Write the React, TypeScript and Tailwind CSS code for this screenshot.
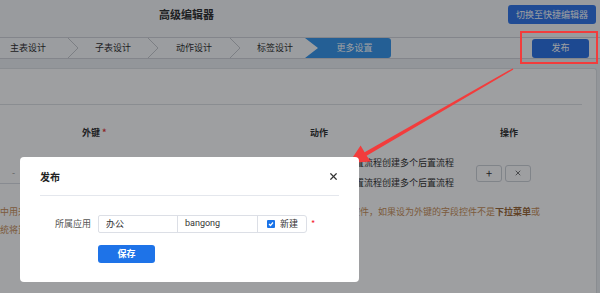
import { X } from "lucide-react"

const steps = [
  { label: "主表设计", text: "w-[68px] pl-[10px] text-left" },
  { label: "子表设计", text: "w-[70px] text-center" },
  { label: "动作设计", text: "w-[72px] text-center" },
]

function Chevron() {
  return (
    <svg width="10" height="20" viewBox="0 0 10 20" className="shrink-0">
      <polyline points="0,0 10,10 0,20" fill="none" stroke="#c9ccd1" strokeWidth="1" />
    </svg>
  )
}

function StepsBar() {
  return (
    <div className="flex h-[20px] items-center text-[9px] text-[#333]">
      {steps.map((s) => (
        <div key={s.label} className="flex items-center">
          <span className={s.text}>{s.label}</span>
          <Chevron />
        </div>
      ))}
      <span className="w-[70px] text-center">标签设计</span>
      <div className="ml-[-5px] flex h-[20px] w-[86px] items-center rounded-r-[3px] bg-[#3a98ec] pl-[13px] text-white [clip-path:polygon(0_0,100%_0,100%_100%,0_100%,13px_50%)]">
        <span className="flex-1 text-center">更多设置</span>
      </div>
    </div>
  )
}

function PublishDialog() {
  return (
    <div className="absolute left-[20px] top-[157px] w-[339px] h-[125px] rounded-[4px] bg-white px-[20px]">
      <div className="flex h-[39px] items-center justify-between border-b border-[#e4e7ed]">
        <span className="text-[10px] font-bold text-[#222]">发布</span>
        <X size={11} strokeWidth={2.6} className="text-[#333]" />
      </div>
      <div className="mt-[19px] flex items-center">
        <span className="w-[51px] text-right text-[9px] text-[#555]">所属应用</span>
        <div className="ml-[7px] flex h-[18px] text-[9px] text-[#333]">
          <div className="flex w-[80px] items-center rounded-l-[2px] border border-[#dcdfe6] pl-[7px]">办公</div>
          <div className="ml-[-1px] flex w-[81px] items-center border border-[#dcdfe6] pl-[7px] font-['Roboto','Noto_Sans_CJK_SC',sans-serif]">bangong</div>
          <div className="ml-[-1px] flex w-[50px] items-center gap-[5px] rounded-r-[3px] border border-[#dcdfe6] pl-[9px]">
            <span className="flex h-[8px] w-[8px] items-center justify-center rounded-[1px] bg-[#1a73e8]">
              <svg width="6" height="6" viewBox="0 0 6 6">
                <polyline points="1,3 2.5,4.5 5,1.5" fill="none" stroke="white" strokeWidth="1.2" />
              </svg>
            </span>
            新建
          </div>
        </div>
        <span className="ml-[4px] text-[9px] text-[#f5222d]">*</span>
      </div>
      <button className="ml-[58px] mt-[12px] h-[18px] w-[57px] rounded-[3px] bg-[#1e73e8] text-[9px] font-bold text-white">
        保存
      </button>
    </div>
  )
}

export default function App() {
  return (
    <div className="relative flex h-[293px] w-[600px] flex-col overflow-hidden bg-[#eef0f4] font-['Noto_Sans_CJK_SC',sans-serif]">
      {/* header */}
      <div className="flex h-[37px] items-center bg-[#f7f8fa] pb-[8px]">
        <span className="ml-[159px] text-[11px] font-bold text-[#333]">高级编辑器</span>
        <button className="ml-auto mr-[4px] h-[19px] rounded-[3px] bg-[#3478ea] px-[8px] text-[9px] text-white">
          切换至快捷编辑器
        </button>
      </div>

      {/* steps */}
      <div className="flex h-[22px] items-center border-y border-[#d3d6db] bg-[#fbfcfd]">
        <StepsBar />
        <button className="ml-auto mr-[11px] h-[19px] w-[57px] rounded-[3px] bg-[#2f74e6] text-[9px] text-white">
          发布
        </button>
      </div>

      <div className="h-[9px]" />

      {/* card */}
      <div className="mr-[3px] flex-1 rounded-tr-[3px] border-r border-t border-[#dfe2e6] bg-white">
        <div className="mr-[14px] h-[36px] border-b border-[#dfe2e6]" />
        <div className="mt-[22px] flex h-[12px] items-center text-[9px] font-bold text-[#333]">
          <span className="w-[310px] pl-[82px]">
            外键 <span className="text-[#e4393c]">*</span>
          </span>
          <span className="w-[190px]">动作</span>
          <span>操作</span>
        </div>
        <div className="mt-[14px] flex items-center text-[9px] text-[#333]">
          <div className="w-[310px]">
            <div className="flex h-[22px] w-[220px] items-center border-b border-[#dcdfe6] pl-[12px] text-[#999]">-</div>
          </div>
          <div className="w-[166px] leading-[20px]">
            <div>可为每个前置流程创建多个后置流程</div>
            <div>可为每个前置流程创建多个后置流程</div>
          </div>
          <div className="flex gap-[3px]">
            <span className="flex h-[17px] w-[26px] items-center justify-center rounded-[3px] border border-[#cfd3d9] text-[11px]">+</span>
            <span className="flex h-[17px] w-[26px] items-center justify-center rounded-[3px] border border-[#cfd3d9]">
              <X size={8} strokeWidth={2} />
            </span>
          </div>
        </div>
        <div className="mt-[10px] whitespace-nowrap text-[9px] leading-[18px] text-[#c9915c]">
          <div>
            中用来关联主表记录的主键字段，一般请您选择子表中类型为下拉菜单或单选按钮的字段控件，如果设为外键的字段控件不是
            <b className="text-[#9c6a3a]">下拉菜单</b>或
          </div>
          <div>统将置空该字段的值，请谨慎设置。</div>
        </div>
      </div>

      {/* modal backdrop */}
      <div className="absolute inset-0 bg-[rgba(0,3,8,0.38)]" />

      {/* annotation */}
      <div className="absolute left-[520px] top-[31px] h-[33px] w-[78px] border-2 border-[#f23c3c]" />
      <svg className="absolute left-0 top-0" width="600" height="293">
        <polygon
          points="512.6,68.4 364.6,152.3 360.6,145.6 349,163 371,161.6 366.6,155.7 513.4,69.6"
          fill="#f23c3c"
        />
      </svg>

      <PublishDialog />
    </div>
  )
}
